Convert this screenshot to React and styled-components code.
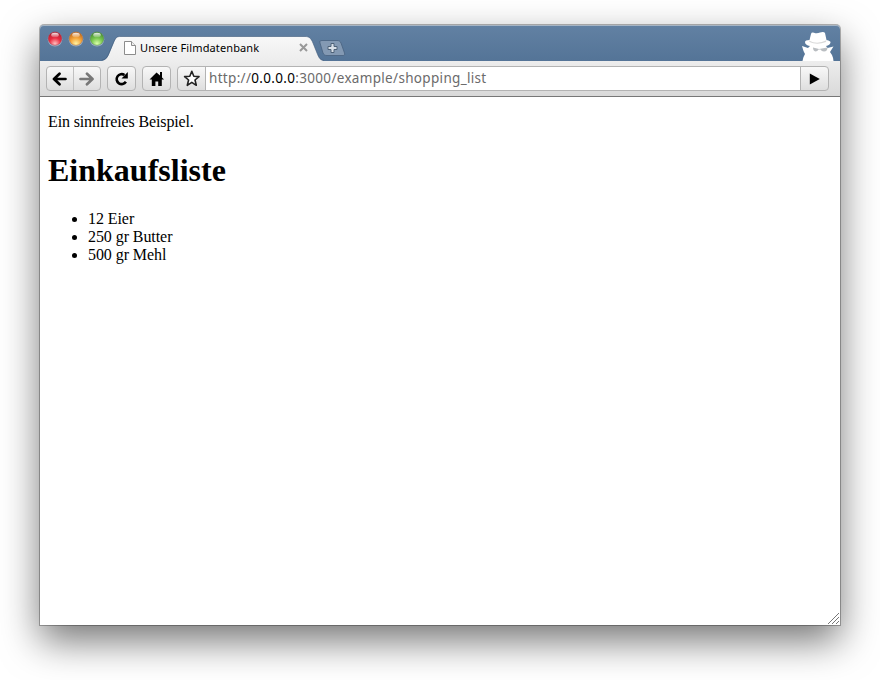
import React from "react";
import styled, { createGlobalStyle } from "styled-components";

const GlobalStyle = createGlobalStyle`
  * { box-sizing: border-box; }
  html, body { margin: 0; padding: 0; background: #fff; }
  body { width: 880px; height: 680px; overflow: hidden; }
  svg { display: block; flex: none; }
`;

const Desktop = styled.div`
  width: 880px;
  height: 680px;
  padding: 25px 40px 55px;
  overflow: hidden;
`;

const BrowserWindow = styled.div`
  display: flex;
  flex-direction: column;
  height: 600px;
  border-radius: 4px 4px 0 0;
  background: #fff;
  box-shadow: 0 0 0 1px rgba(0, 0, 0, 0.28), 0 16px 38px rgba(0, 0, 0, 0.54);
`;

const TitleBar = styled.header`
  display: flex;
  align-items: flex-start;
  height: 36px;
  padding-left: 7px;
  border-radius: 4px 4px 0 0;
  background: linear-gradient(#6281a3, #547497);
  box-shadow: inset 0 1px 0 #a7b5c4;
`;

const Lights = styled.div`
  display: flex;
  gap: 5px;
  margin-top: 5px;
`;

const TabShape = styled.div`
  display: grid;
  width: 222px;
  height: 25px;
  margin: 11px 0 0 -3px;
  > * { grid-area: 1 / 1; }
`;

const TabContent = styled.div`
  display: flex;
  align-items: center;
  z-index: 1;
  padding: 0 16px 2px 22px;
`;

const TabTitle = styled.span`
  flex: 1;
  margin-left: 4px;
  color: #000;
  font: 11px/16px "Noto Sans", "Open Sans", sans-serif;
  letter-spacing: 0.12px;
  white-space: nowrap;
`;

const NewTab = styled.div`
  margin: 15px 0 0 -5px;
`;

const Incognito = styled.div`
  margin: 6px 6px 0 auto;
`;

const Toolbar = styled.nav`
  display: flex;
  align-items: flex-start;
  gap: 6px;
  height: 36px;
  padding: 5px 11px 0 6px;
  background: linear-gradient(#ededed, #d9d9d9);
  border-bottom: 1px solid #777;
`;

const ButtonGroup = styled.div`
  display: flex;
  flex: ${(p) => (p.$grow ? "1" : "none")};
  height: 25px;
  border: 1px solid #b3b3b3;
  border-radius: 4px;
  overflow: hidden;
  background: linear-gradient(#f8f8f8, #dedede);
`;

const ToolButton = styled.button`
  display: flex;
  align-items: center;
  justify-content: center;
  flex: none;
  width: ${(p) => p.$width}px;
  padding: 0;
  border: 0;
  border-left: ${(p) => (p.$divided ? "1px solid #c0c0c0" : "0")};
  background: transparent;
`;

const Address = styled.div`
  flex: 1;
  padding-left: 3px;
  border-left: 1px solid #b3b3b3;
  border-right: 1px solid #b3b3b3;
  background: #fff;
  color: #6b6b6b;
  font: 13.5px/23px "Noto Sans", "Open Sans", sans-serif;
  letter-spacing: 0.32px;
  white-space: nowrap;
`;

const Host = styled.span`
  color: #000;
`;

const Page = styled.main`
  display: flex;
  flex-direction: column;
  flex: 1;
  padding: 16px 1px 1px 8px;
  color: #000;
  font: 16px/18px "Liberation Serif", "Times New Roman", serif;
`;

const Intro = styled.p`
  margin: 0;
  letter-spacing: -0.13px;
`;

const Heading = styled.h1`
  margin: 21px 0;
  font-size: 32px;
  line-height: 37px;
`;

const List = styled.ul`
  margin: 0;
  padding-left: 40px;
  letter-spacing: -0.07px;
`;

const Grip = styled.div`
  margin: auto 0 0 auto;
`;

function Light({ id, dark, mid, glow }) {
  return (
    <svg width="16" height="18" viewBox="0 0 16 18">
      <defs>
        <radialGradient id={id} cx="50%" cy="88%" r="88%">
          <stop offset="0" stopColor={glow} />
          <stop offset="0.5" stopColor={mid} />
          <stop offset="1" stopColor={dark} />
        </radialGradient>
        <linearGradient id={id + "Shine"} x2="0" y2="1">
          <stop offset="0" stopColor="#fff" stopOpacity="0.9" />
          <stop offset="1" stopColor="#fff" stopOpacity="0.15" />
        </linearGradient>
      </defs>
      <circle cx="8" cy="9.300" r="7.300" fill="#b4c3d2" opacity="0.75" />
      <circle cx="8" cy="8.600" r="6.700" fill={`url(#${id})`} stroke={dark} strokeWidth="0.600" strokeOpacity="0.7" />
      <ellipse cx="8" cy="5" rx="3.800" ry="2.300" fill={`url(#${id}Shine)`} />
    </svg>
  );
}

function TabOutline() {
  return (
    <svg width="222" height="25" viewBox="0 0 222 25">
      <defs>
        <linearGradient id="tabFill" x2="0" y2="1">
          <stop offset="0" stopColor="#f8f8f8" />
          <stop offset="1" stopColor="#ededed" />
        </linearGradient>
      </defs>
      <path
        d="M0 25C4 24 5.500 22 7.500 17L12 6C14 1.500 15 .5 19 .5H203C207 .5 209 2 211 7L215 17C217 22 218 24 222 25Z"
        fill="url(#tabFill)"
      />
      <path
        d="M0 24C4 23.500 5.500 21 7.500 16L12 5.500C14 1.200 15 .5 19 .5H203C207 .5 209 2 211 7L215 17C217 22 218 24 222 24.500"
        fill="none" stroke="#405a79" strokeOpacity="0.6"
      />
    </svg>
  );
}

function PageIcon() {
  return (
    <svg width="12" height="14" viewBox="0 0 12 14">
      <path d="M.5.5H7.500L11.500 4.500V13.500H.5Z" fill="#fff" stroke="#8c8c8c" />
      <path d="M7.500.5V4.500H11.500" fill="#eee" stroke="#8c8c8c" />
    </svg>
  );
}

function CloseIcon() {
  return (
    <svg width="9" height="9" viewBox="0 0 9 9">
      <path d="M1 1 8 8M8 1 1 8" stroke="#999" strokeWidth="2" />
    </svg>
  );
}

function NewTabIcon() {
  return (
    <svg width="27" height="17" viewBox="0 0 27 17">
      <path
        d="M3 .5H18C20 .5 21 1 22 3L25.500 13C26 15 25.500 15.500 24 15.500H8C6 15.500 5 15 4 13L1 3C.5 1 1 .5 3 .5Z"
        fill="#8399b3" stroke="#48617f" strokeOpacity="0.8"
      />
      <path
        d="M12 3.500H15V6.500H18V9.500H15V12.500H12V9.500H9V6.500H12Z"
        fill="#d9e0e8" stroke="#4e6278"
      />
    </svg>
  );
}

function IncognitoIcon() {
  return (
    <svg width="33" height="30" viewBox="0 0 33 30">
      <path
        d="M8.500 9 10 3Q10.500 1 13 1.800Q16 3 19 1.500Q23 .5 24 2L25.500 9Q30 10 29.500 11.500Q29 14 25 15L26.500 17L32.500 15.500L29 21L31 24Q32 26 32.500 30H1.500Q2 26 4 23L2.500 20L1 15L7 17L9 15Q4 14 4 11Q4 9 8.500 9Z"
        fill="#fff"
      />
      <path
        d="M8 9.500Q16 14 25.500 9.300L25 11Q16 14.500 8.500 11Z"
        fill="#d8d8d8"
      />
      <path
        d="M12 16.500 18 18 26.500 16.500Q26.500 20.500 23 20.500Q20.500 20.500 19.500 18.500H17.500Q16.500 20.500 14.500 20.500Q12 20 12 16.500Z"
        fill="#b9bdc1"
      />
    </svg>
  );
}

function ArrowIcon({ forward }) {
  return (
    <svg width="16" height="14" viewBox="0 0 16 14">
      <path
        d={forward ? "M1.500 7H13M8 1.800 13.500 7 8 12.200" : "M13.500 7H2.500M7.500 1.800 2 7 7.500 12.200"}
        fill="none" stroke={forward ? "#777" : "#000"} strokeWidth="2.700"
        strokeLinecap="round" strokeLinejoin="round"
      />
    </svg>
  );
}

function ReloadIcon() {
  return (
    <svg width="16" height="16" viewBox="0 0 16 16">
      <path d="M11.900 10.800A5 5 0 1 1 10.500 4" fill="none" stroke="#000" strokeWidth="2.600" />
      <path d="M13.800 1V7.500H7.500Z" />
    </svg>
  );
}

function HomeIcon() {
  return (
    <svg width="16" height="16" viewBox="0 0 16 16">
      <path d="M7.500 1.500 .5 8.500H2.800V15H6.400V10.500H9.200V15H12.800V8.500H15L13 6.500V1H11V4.600Z" />
    </svg>
  );
}

function StarIcon() {
  return (
    <svg width="17" height="17" viewBox="0 0 17 17">
      <path
        d="M8.800 1.300 10.800 6.200 16 6.600 12 10 13.300 15.300 8.800 12.400 4.300 15.300 5.600 10 1.600 6.600 6.800 6.200Z"
        fill="#fff" stroke="#222" strokeWidth="1.600" strokeLinejoin="round"
      />
    </svg>
  );
}

function GoIcon() {
  return (
    <svg width="11" height="12" viewBox="0 0 11 12">
      <path d="M.8.5 10.800 6 .8 11.500Z" />
    </svg>
  );
}

function GripIcon() {
  return (
    <svg width="11" height="11" viewBox="0 0 11 11">
      <path d="M0 11 11 0M4 11 11 4M8 11 11 8" stroke="#777" />
    </svg>
  );
}

const items = ["12 Eier", "250 gr Butter", "500 gr Mehl"];

export default function App() {
  return (
    <>
      <GlobalStyle />
      <Desktop>
        <BrowserWindow>
          <TitleBar>
            <Lights>
              <Light id="red" dark="#a92232" mid="#ea2a40" glow="#ffc0c0" />
              <Light id="amber" dark="#b8621c" mid="#f4a438" glow="#fff3a4" />
              <Light id="green" dark="#438433" mid="#76c64c" glow="#dcffac" />
            </Lights>
            <TabShape>
              <TabOutline />
              <TabContent>
                <PageIcon />
                <TabTitle>Unsere Filmdatenbank</TabTitle>
                <CloseIcon />
              </TabContent>
            </TabShape>
            <NewTab><NewTabIcon /></NewTab>
            <Incognito><IncognitoIcon /></Incognito>
          </TitleBar>
          <Toolbar>
            <ButtonGroup>
              <ToolButton $width={26} aria-label="Zurück"><ArrowIcon /></ToolButton>
              <ToolButton $width={27} $divided aria-label="Vorwärts"><ArrowIcon forward /></ToolButton>
            </ButtonGroup>
            <ButtonGroup>
              <ToolButton $width={27} aria-label="Neu laden"><ReloadIcon /></ToolButton>
            </ButtonGroup>
            <ButtonGroup>
              <ToolButton $width={27} aria-label="Startseite"><HomeIcon /></ToolButton>
            </ButtonGroup>
            <ButtonGroup $grow>
              <ToolButton $width={27} aria-label="Lesezeichen"><StarIcon /></ToolButton>
              <Address>http://<Host>0.0.0.0</Host>:3000/example/shopping_list</Address>
              <ToolButton $width={27} aria-label="Los"><GoIcon /></ToolButton>
            </ButtonGroup>
          </Toolbar>
          <Page>
            <Intro>Ein sinnfreies Beispiel.</Intro>
            <Heading>Einkaufsliste</Heading>
            <List>
              {items.map((item) => <li key={item}>{item}</li>)}
            </List>
            <Grip><GripIcon /></Grip>
          </Page>
        </BrowserWindow>
      </Desktop>
    </>
  );
}
